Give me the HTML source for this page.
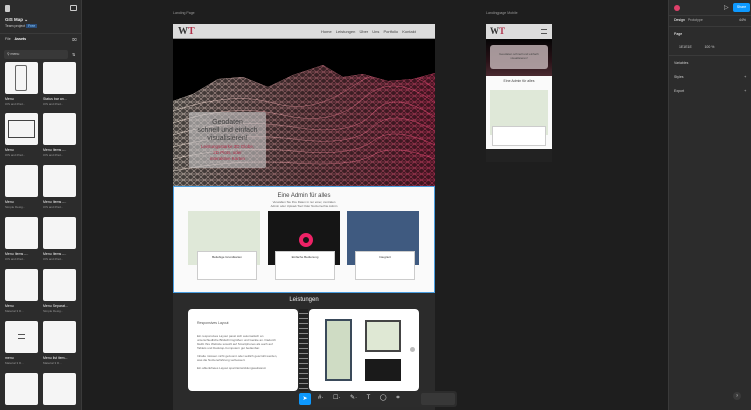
<!DOCTYPE html>
<html><head><meta charset="utf-8"><style>
*{margin:0;padding:0;box-sizing:border-box}
body{width:751px;height:410px;overflow:hidden;background:#1e1e1e;font-family:"Liberation Sans",sans-serif;position:relative;color:#ddd}
.abs{position:absolute}
.lp{left:0;top:0;width:82px;height:410px;background:#2c2c2c;border-right:1px solid #3a3a3a}
.rp{left:668px;top:0;width:83px;height:410px;background:#2c2c2c;border-left:1px solid #3a3a3a}
.t{font-size:4px;color:#ccc;white-space:nowrap}
.card{background:#f5f5f5;border-radius:2px}
.thumbl{font-size:3.5px;color:#eee;white-space:nowrap}
.thumbs{font-size:3px;color:#999;white-space:nowrap}
</style></head><body>
<!-- left panel -->
<div class="abs lp">
 <div class="abs" style="left:5px;top:5px;width:5px;height:7px;background:#ccc;border-radius:1px"></div>
 <div class="abs" style="left:70px;top:5px;width:7px;height:6px;border:1px solid #ccc;border-radius:1px"></div>
 <div class="abs t" style="left:5px;top:17px;font-weight:bold;color:#eee;font-size:4.5px">GIS Map ⌄</div>
 <div class="abs t" style="left:5px;top:24px;font-size:3.5px">Team project <span style="background:#2a4d7a;color:#8cf;padding:0 2px">Free</span></div>
 <div class="abs" style="left:0;top:33px;width:82px;height:1px;background:#3a3a3a"></div>
 <div class="abs t" style="left:5px;top:37px;font-size:3.5px">File &nbsp;&nbsp; <b style="color:#fff">Assets</b></div>
 <div class="abs t" style="left:72px;top:37px">⌧</div>
 <div class="abs" style="left:4px;top:50px;width:64px;height:9px;background:#383838;border-radius:2px"></div>
 <div class="abs t" style="left:7px;top:52px;font-size:3.5px">⚲ menu</div>
 <div class="abs t" style="left:72px;top:52px">⇅</div>
 <div class="abs card" style="left:5px;top:62px;width:33px;height:32px"><div class="abs" style="left:10px;top:3px;width:12px;height:26px;border:1px solid #666;border-radius:2px"></div></div>
 <div class="abs card" style="left:43px;top:62px;width:33px;height:32px"></div>
 <div class="abs thumbl" style="left:5px;top:97px">Menu</div><div class="abs thumbs" style="left:5px;top:102px">iOS and iPad...</div>
 <div class="abs thumbl" style="left:43px;top:97px">Status bar an...</div><div class="abs thumbs" style="left:43px;top:102px">iOS and iPad...</div>
 <div class="abs card" style="left:5px;top:113px;width:33px;height:32px"><div class="abs" style="left:3px;top:7px;width:27px;height:18px;border:1px solid #444"></div></div>
 <div class="abs card" style="left:43px;top:113px;width:33px;height:32px"></div>
 <div class="abs thumbl" style="left:5px;top:148px">Menu</div><div class="abs thumbs" style="left:5px;top:153px">iOS and iPad...</div>
 <div class="abs thumbl" style="left:43px;top:148px">Menu Items -...</div><div class="abs thumbs" style="left:43px;top:153px">iOS and iPad...</div>
 <div class="abs card" style="left:5px;top:165px;width:33px;height:32px"></div>
 <div class="abs card" style="left:43px;top:165px;width:33px;height:32px"></div>
 <div class="abs thumbl" style="left:5px;top:200px">Menu</div><div class="abs thumbs" style="left:5px;top:205px">Simple Desig...</div>
 <div class="abs thumbl" style="left:43px;top:200px">Menu Items -...</div><div class="abs thumbs" style="left:43px;top:205px">iOS and iPad...</div>
 <div class="abs card" style="left:5px;top:217px;width:33px;height:32px"></div>
 <div class="abs card" style="left:43px;top:217px;width:33px;height:32px"></div>
 <div class="abs thumbl" style="left:5px;top:252px">Menu Items -...</div><div class="abs thumbs" style="left:5px;top:257px">iOS and iPad...</div>
 <div class="abs thumbl" style="left:43px;top:252px">Menu Items -...</div><div class="abs thumbs" style="left:43px;top:257px">iOS and iPad...</div>
 <div class="abs card" style="left:5px;top:269px;width:33px;height:32px"></div>
 <div class="abs card" style="left:43px;top:269px;width:33px;height:32px"></div>
 <div class="abs thumbl" style="left:5px;top:304px">Menu</div><div class="abs thumbs" style="left:5px;top:309px">Material 3 D...</div>
 <div class="abs thumbl" style="left:43px;top:304px">Menu Separat...</div><div class="abs thumbs" style="left:43px;top:309px">Simple Desig...</div>
 <div class="abs card" style="left:5px;top:321px;width:33px;height:32px"><div class="abs" style="left:13px;top:13px;width:7px;height:5px;border-top:1px solid #555;border-bottom:1px solid #555"></div></div>
 <div class="abs card" style="left:43px;top:321px;width:33px;height:32px"></div>
 <div class="abs thumbl" style="left:5px;top:356px">menu</div><div class="abs thumbs" style="left:5px;top:361px">Material 3 D...</div>
 <div class="abs thumbl" style="left:43px;top:356px">Menu list item...</div><div class="abs thumbs" style="left:43px;top:361px">Material 3 D...</div>
 <div class="abs card" style="left:5px;top:373px;width:33px;height:32px"></div>
 <div class="abs card" style="left:43px;top:373px;width:33px;height:32px"></div>
</div>

<!-- landing page frame -->
<div class="abs t" style="left:173px;top:11px;font-size:3.5px;color:#999">Landing Page</div>
<div class="abs" style="left:173px;top:24px;width:262px;height:15px;background:#dcdcdc;border-bottom:1px solid #999"></div>
<div class="abs" style="left:178px;top:26px;font-family:'Liberation Serif',serif;font-size:10px;font-weight:bold;color:#333">W<span style="color:#b0304a">T</span></div>
<div class="abs t" style="left:321px;top:29px;color:#444;font-size:4px;word-spacing:3px">Home Leistungen Über&nbsp;Uns Portfolio Kontakt</div>
<div class="abs" style="left:173px;top:39px;width:262px;height:147px;background:#000;overflow:hidden">
 <svg width="262" height="147" viewBox="0 0 262 147">
  <defs>
   <linearGradient id="g" x1="0" x2="1"><stop offset="0" stop-color="#e8dcd0"/><stop offset="0.5" stop-color="#c07880"/><stop offset="1" stop-color="#d8406a"/></linearGradient>
   <pattern id="p" width="7" height="6" patternUnits="userSpaceOnUse"><path d="M0 0L7 6M7 0L0 6M0 3H7" stroke="#fff" stroke-width="0.5" fill="none"/></pattern>
   <mask id="m"><rect width="262" height="147" fill="url(#p)"/></mask>
   <clipPath id="c"><path d="M0 62 L20 55 L45 40 L70 38 L95 48 L120 36 L150 26 L170 38 L190 35 L215 42 L240 40 L262 34 V147 H0Z"/></clipPath>
  </defs>
  <g clip-path="url(#c)">
   <rect width="262" height="147" fill="url(#g)" opacity="0.3"/>
   <rect width="262" height="147" fill="url(#g)" mask="url(#m)" opacity="0.9"/>
  </g>
  <g clip-path="url(#c)" stroke="url(#g)" stroke-width="0.5" fill="none">
   <path d="M0 62 L20 55 L45 40 L70 38 L95 48 L120 36 L150 26 L170 38 L190 35 L215 42 L240 40 L262 34"/>
   <path d="M0 72 Q60 52 100 64 T180 47 T262 50"/>
   <path d="M0 84 Q60 64 110 76 T190 60 T262 64"/>
   <path d="M0 96 Q60 78 120 88 T200 74 T262 78"/>
   <path d="M0 108 Q60 92 120 100 T200 88 T262 92"/>
   <path d="M0 120 Q60 106 120 112 T200 102 T262 106"/>
   <path d="M0 132 Q60 120 120 124 T200 116 T262 120"/>
  </g>
 </svg>
</div>
<div class="abs" style="left:189px;top:112px;width:77px;height:56px;background:rgba(200,200,200,0.6);border-radius:2px"></div>
<div class="abs" style="left:189px;top:119px;width:77px;text-align:center;font-size:7px;line-height:8px;color:#444">Geodaten<br>schnell und einfach<br>visualisieren!</div>
<div class="abs" style="left:189px;top:144px;width:77px;text-align:center;font-size:4.5px;line-height:6px;color:#b0304a">Leistungsstarke 3D Globe,<br>2D Plots, oder<br>interaktive Karten</div>

<!-- admin section -->
<div class="abs" style="left:173px;top:186px;width:262px;height:107px;background:#fafafa;border:1px solid #4a9ee0"></div>
<div class="abs" style="left:173px;top:193px;width:262px;text-align:center;font-size:6px;color:#444">Eine Admin für alles</div>
<div class="abs" style="left:173px;top:200px;width:262px;text-align:center;font-size:3px;line-height:4px;color:#666">Verwalten Sie Ihre Daten in nur einer, zentralen<br>Admin oder Upload-Tool Oder Nutzerrechte Admin</div>
<div class="abs" style="left:188px;top:211px;width:72px;height:54px;background:#dfe8d8"></div>
<div class="abs" style="left:268px;top:211px;width:72px;height:54px;background:#151515"><div class="abs" style="left:31px;top:22px;width:14px;height:14px;border-radius:50%;border:4px solid #e26"></div></div>
<div class="abs" style="left:347px;top:211px;width:72px;height:54px;background:#3f5a80"></div>
<div class="abs" style="left:197px;top:251px;width:60px;height:29px;background:#fff;border:1px solid #ccc"></div>
<div class="abs" style="left:275px;top:251px;width:60px;height:29px;background:#fff;border:1px solid #ccc"></div>
<div class="abs" style="left:355px;top:251px;width:60px;height:29px;background:#fff;border:1px solid #ccc"></div>
<div class="abs t" style="left:197px;top:255px;width:60px;text-align:center;font-size:3px;color:#333">Beliebige Grundkarten</div>
<div class="abs t" style="left:275px;top:255px;width:60px;text-align:center;font-size:3px;color:#333">Einfache Bedienung</div>
<div class="abs t" style="left:355px;top:255px;width:60px;text-align:center;font-size:3px;color:#333">Integriert</div>

<!-- Leistungen -->
<div class="abs" style="left:173px;top:293px;width:262px;height:117px;background:#2b2b2b"></div>
<div class="abs" style="left:173px;top:297px;width:262px;text-align:center;font-size:6px;color:#eee">Leistungen</div>
<div class="abs" style="left:188px;top:309px;width:110px;height:82px;background:#fff;border-radius:4px"></div>
<div class="abs" style="left:309px;top:309px;width:110px;height:82px;background:#fff;border-radius:4px"></div>
<div class="abs" style="left:299px;top:309px;width:9px;height:82px;background:repeating-linear-gradient(#222 0 4px,#888 4px 5px)"></div>
<div class="abs t" style="left:197px;top:321px;font-size:3.5px;color:#555">Responsives Layout</div>
<div class="abs" style="left:197px;top:334px;width:85px;font-size:3px;line-height:4px;color:#666">Ein responsives Layout passt sich automatisch an unterschiedliche Bildschirmgrößen und Geräte an. Dadurch bleibt Ihre Website sowohl auf Smartphones als auch auf Tablets und Desktop-Computern gut bedienbar.<br><br>Inhalte müssen nicht gezoomt oder seitlich gescrollt werden, was die Nutzererfahrung verbessert.<br><br>Ein ablenkfreies Layout spart Entwicklungsaufwand.</div>
<div class="abs" style="left:325px;top:319px;width:27px;height:62px;background:#cfdcc4;border:2px solid #3a4a5a"></div>
<div class="abs" style="left:365px;top:320px;width:36px;height:32px;background:#dfe8d4;border:2px solid #444"></div>
<div class="abs" style="left:365px;top:359px;width:36px;height:22px;background:#1a1a1a"></div>
<div class="abs" style="left:410px;top:347px;width:5px;height:5px;border-radius:50%;background:#bbb"></div>

<!-- mobile frame -->
<div class="abs t" style="left:486px;top:11px;font-size:3.5px;color:#999">Landingpage Mobile</div>
<div class="abs" style="left:486px;top:24px;width:66px;height:15px;background:#dcdcdc"></div>
<div class="abs" style="left:490px;top:26px;font-family:'Liberation Serif',serif;font-size:9px;font-weight:bold;color:#333">W<span style="color:#b0304a">T</span></div>
<div class="abs" style="left:541px;top:29px;width:6px;height:5px;border-top:1px solid #555;border-bottom:1px solid #555"></div>
<div class="abs" style="left:486px;top:39px;width:66px;height:37px;background:linear-gradient(#050505 0%,#2a1218 60%,#4a2a30 100%)"></div>
<div class="abs" style="left:490px;top:45px;width:58px;height:24px;background:rgba(190,175,178,0.85);border-radius:3px"></div>
<div class="abs" style="left:490px;top:52px;width:58px;text-align:center;font-size:3px;line-height:4px;color:#444">Geodaten schnell und einfach<br>visualisieren!</div>
<div class="abs" style="left:486px;top:76px;width:66px;height:73px;background:#fafafa"></div>
<div class="abs" style="left:486px;top:79px;width:66px;text-align:center;font-size:3.5px;color:#444">Eine Admin für alles</div>
<div class="abs" style="left:490px;top:90px;width:58px;height:45px;background:#dfe8d8"></div>
<div class="abs" style="left:492px;top:126px;width:54px;height:20px;background:#fff;border:1px solid #ccc"></div>
<div class="abs" style="left:486px;top:149px;width:66px;height:13px;background:#222"></div>

<!-- right panel -->
<div class="abs rp">
 <div class="abs" style="left:5px;top:5px;width:6px;height:6px;border-radius:50%;background:#e0406a"></div>
 <div class="abs t" style="left:55px;top:4px;font-size:6px">▷</div>
 <div class="abs" style="left:64px;top:3px;width:17px;height:9px;background:#0d99ff;border-radius:2px;font-size:3.5px;color:#fff;text-align:center;line-height:9px">Share</div>
 <div class="abs" style="left:0;top:15px;width:83px;height:1px;background:#3a3a3a"></div>
 <div class="abs t" style="left:5px;top:18px;font-size:3.5px;color:#fff">Design &nbsp;&nbsp;<span style="color:#aaa">Prototype</span></div>
 <div class="abs t" style="left:70px;top:18px;font-size:3.5px">44%</div>
 <div class="abs" style="left:0;top:26px;width:83px;height:1px;background:#3a3a3a"></div>
 <div class="abs t" style="left:5px;top:32px;font-size:3.5px;color:#fff">Page</div>
 <div class="abs t" style="left:10px;top:45px;font-size:3.5px">1E1E1E &nbsp;&nbsp;&nbsp;&nbsp;&nbsp;&nbsp;&nbsp;&nbsp;&nbsp;&nbsp;&nbsp; 100 %</div>
 <div class="abs" style="left:0;top:55px;width:83px;height:1px;background:#3a3a3a"></div>
 <div class="abs t" style="left:5px;top:61px;font-size:3.5px">Variables</div>
 <div class="abs t" style="left:5px;top:75px;font-size:3.5px">Styles</div><div class="abs t" style="left:75px;top:74px">+</div>
 <div class="abs t" style="left:5px;top:89px;font-size:3.5px">Export</div><div class="abs t" style="left:75px;top:88px">+</div>
 <div class="abs" style="left:64px;top:392px;width:8px;height:8px;border-radius:50%;background:#3a3a3a;font-size:4px;text-align:center;line-height:8px">?</div>
</div>

<!-- toolbar -->
<div class="abs" style="left:297px;top:391px;width:160px;height:16px;background:#2c2c2c;border-radius:3px"></div>
<div class="abs" style="left:299px;top:393px;width:12px;height:12px;background:#0d99ff;border-radius:2px;color:#fff;font-size:6px;text-align:center;line-height:12px">➤</div>
<div class="abs t" style="left:318px;top:394px;font-size:6px;word-spacing:8px;color:#ddd">#· ☐· ✎· T ◯ ⌗</div>
<div class="abs" style="left:421px;top:393px;width:34px;height:12px;background:#383838;border-radius:2px"></div>
</body></html>
